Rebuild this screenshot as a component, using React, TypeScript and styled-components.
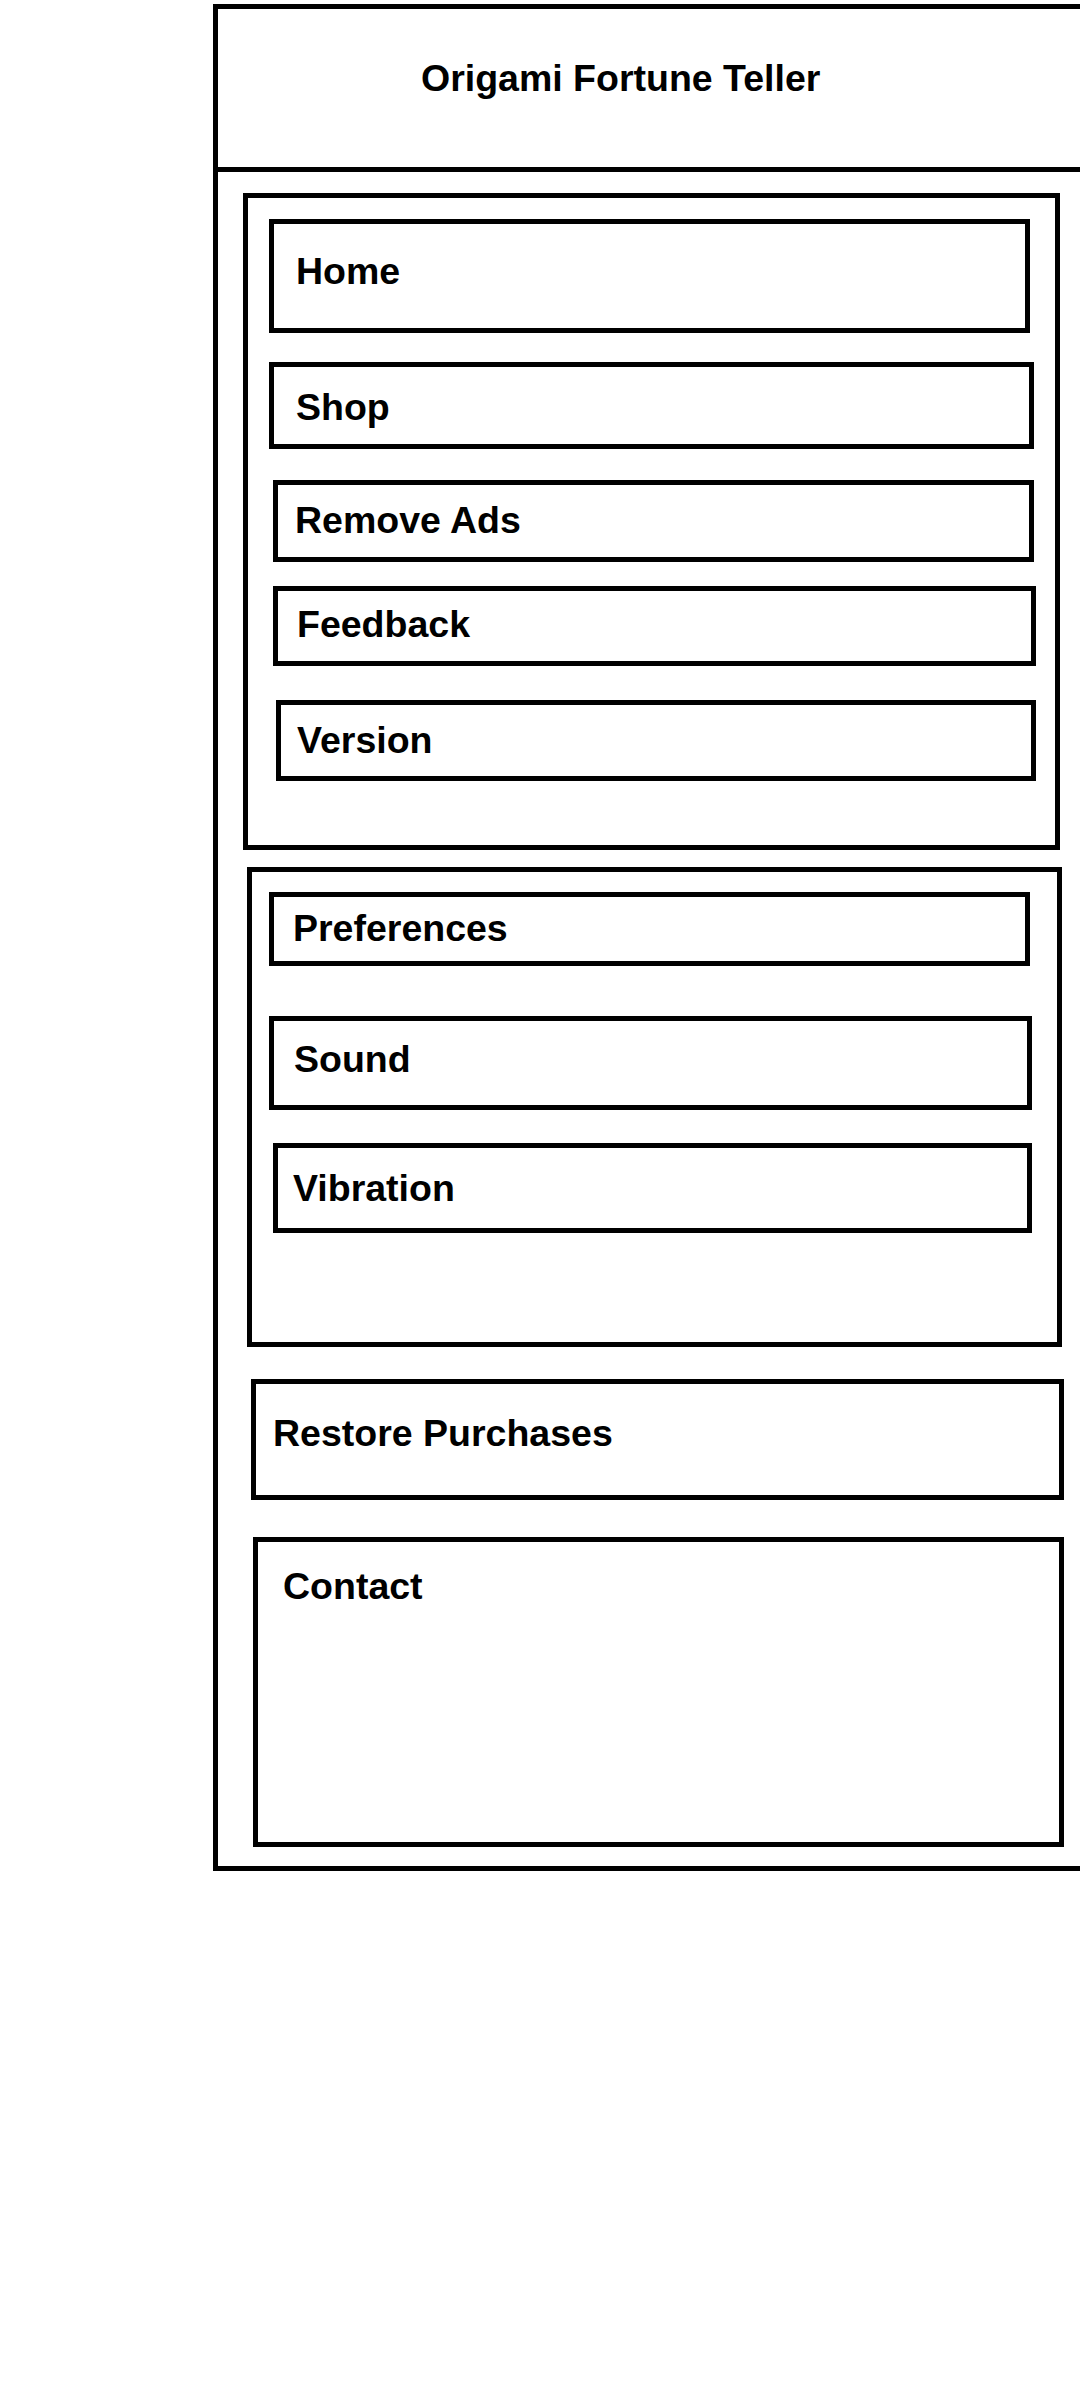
import React from "react";
import styled, { createGlobalStyle } from "styled-components";

const Global = createGlobalStyle`
  html, body {
    margin: 0;
    padding: 0;
    background: #ffffff;
    overflow: hidden;
  }
  * { box-sizing: border-box; }
  body {
    font-family: "Liberation Sans", Arial, sans-serif;
    color: #000000;
  }
`;

const Frame = styled.div`
  margin: 4px 0 0 213px;
  border: 5px solid #000;
  border-right: none;
  padding-bottom: 19px;
  display: flex;
  flex-direction: column;
  align-items: flex-start;
`;

const Header = styled.header`
  align-self: stretch;
  height: 163px;
  border-bottom: 5px solid #000;
  padding: 51px 0 0 203px;
`;

const Title = styled.h1`
  margin: 0;
  font-family: "Liberation Sans", Arial, sans-serif;
  font-weight: 700;
  font-size: 37.5px;
  line-height: 37px;
  white-space: nowrap;
`;

const Panel = styled.section<{ $ml: number; $mt: number; $w: number; $h: number }>`
  margin: ${(p) => p.$mt}px 0 0 ${(p) => p.$ml}px;
  width: ${(p) => p.$w}px;
  height: ${(p) => p.$h}px;
  border: 5px solid #000;
  display: flex;
  flex-direction: column;
  align-items: flex-start;
`;

const Item = styled.div<{
  $ml: number;
  $mt: number;
  $w: number;
  $h: number;
  $px: number;
  $py: number;
}>`
  margin: ${(p) => p.$mt}px 0 0 ${(p) => p.$ml}px;
  width: ${(p) => p.$w}px;
  height: ${(p) => p.$h}px;
  border: 5px solid #000;
  padding: ${(p) => p.$py}px 0 0 ${(p) => p.$px}px;
  flex-shrink: 0;
`;

const Label = styled.span`
  display: block;
  font-family: "Liberation Sans", Arial, sans-serif;
  font-weight: 700;
  font-size: 37.5px;
  line-height: 37px;
  white-space: nowrap;
`;

type Row = { label: string; ml: number; mt: number; w: number; h: number; px: number; py: number };

const mainItems: Row[] = [
  { label: "Home", ml: 21, mt: 21, w: 761, h: 114, px: 22, py: 29 },
  { label: "Shop", ml: 21, mt: 29, w: 765, h: 87, px: 22, py: 22 },
  { label: "Remove Ads", ml: 25, mt: 31, w: 761, h: 82, px: 17, py: 17 },
  { label: "Feedback", ml: 25, mt: 24, w: 763, h: 80, px: 19, py: 15 },
  { label: "Version", ml: 28, mt: 34, w: 760, h: 81, px: 16, py: 17 },
];

const prefItems: Row[] = [
  { label: "Preferences", ml: 17, mt: 20, w: 761, h: 74, px: 19, py: 13 },
  { label: "Sound", ml: 17, mt: 50, w: 763, h: 94, px: 20, py: 20 },
  { label: "Vibration", ml: 21, mt: 33, w: 759, h: 90, px: 15, py: 22 },
];

const renderRow = (r: Row) => (
  <Item key={r.label} $ml={r.ml} $mt={r.mt} $w={r.w} $h={r.h} $px={r.px} $py={r.py}>
    <Label>{r.label}</Label>
  </Item>
);

export default function App() {
  return (
    <>
      <Global />
      <Frame>
        <Header>
          <Title>Origami Fortune Teller</Title>
        </Header>
        <Panel $ml={25} $mt={21} $w={817} $h={657}>
          {mainItems.map(renderRow)}
        </Panel>
        <Panel $ml={29} $mt={17} $w={815} $h={480}>
          {prefItems.map(renderRow)}
        </Panel>
        <Item $ml={33} $mt={32} $w={813} $h={121} $px={17} $py={31}>
          <Label>Restore Purchases</Label>
        </Item>
        <Item $ml={35} $mt={37} $w={811} $h={310} $px={25} $py={26}>
          <Label>Contact</Label>
        </Item>
      </Frame>
    </>
  );
}
